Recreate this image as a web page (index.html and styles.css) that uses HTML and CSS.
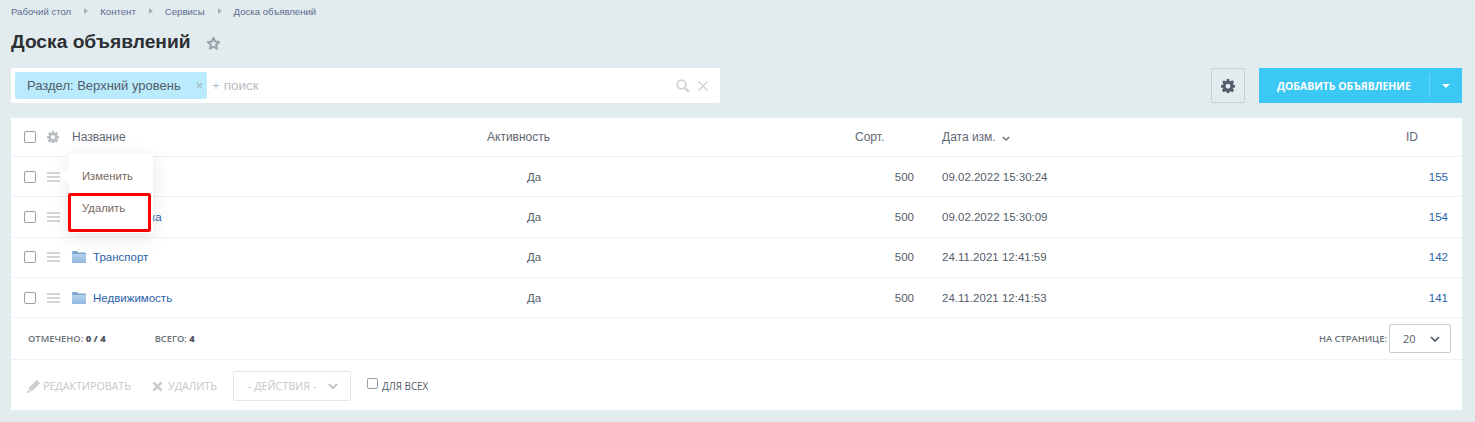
FILE: index.html
```html
<!DOCTYPE html>
<html lang="ru">
<head>
<meta charset="utf-8">
<title>Доска объявлений</title>
<link rel="stylesheet" href="styles.css">
</head>
<body>
<svg class="defs" width="0" height="0" aria-hidden="true">
  <defs>
    <symbol id="gear" viewBox="0 0 16 16">
      <path fill-rule="evenodd" d="M6.600 0h2.800l.4 2.200 1.200.5L12.900 1.400l2 2-1.300 1.900.5 1.200 2.200.4v2.800l-2.200.4-.5 1.200 1.300 1.900-2 2-1.900-1.300-1.200.5-.4 2.200H6.600l-.4-2.200-1.200-.5-1.900 1.300-2-2 1.300-1.900-.5-1.200L0 9.700V6.900l2.200-.4.5-1.200-1.300-1.900 2-2L5 2.700l1.200-.5zM8 5.400a2.800 2.800 0 1 0 0 5.600 2.800 2.800 0 0 0 0-5.600z"/>
    </symbol>
    <linearGradient id="folder-face" x1="0" y1="0" x2="0" y2="1">
      <stop offset="0" stop-color="#b5d3ee"/>
      <stop offset="1" stop-color="#8fb7de"/>
    </linearGradient>
    <symbol id="folder" viewBox="0 0 15 13">
      <path fill="#7ba4cf" d="M0 1.500C0 .7.6 0 1.400 0h3.400c.6 0 1 .3 1.300.8l.4.7h7.100c.8 0 1.400.6 1.400 1.400v8.700c0 .8-.6 1.400-1.400 1.400H1.400C.6 13 0 12.400 0 11.600z"/>
      <path fill="url(#folder-face)" d="M0 4.200c0-.6.5-1 1-1h13c.5 0 1 .4 1 1v7.400c0 .8-.6 1.400-1.400 1.400H1.400C.6 13 0 12.400 0 11.600z"/>
    </symbol>
    <symbol id="chev" viewBox="0 0 10 6">
      <path fill="none" stroke="currentColor" stroke-width="1.700" d="M1 1l4 4 4-4"/>
    </symbol>
  </defs>
</svg>

<nav class="crumbs">
  <a>Рабочий стол</a><i class="crumb-arrow"></i>
  <a>Контент</a><i class="crumb-arrow"></i>
  <a>Сервисы</a><i class="crumb-arrow"></i>
  <a>Доска объявлений</a>
</nav>

<header class="title-row">
  <h1>Доска объявлений</h1>
  <svg class="star" viewBox="0 0 16 16"><path fill="none" stroke="#98a2a9" stroke-width="2.200" stroke-linejoin="round" d="M8 2l1.800 3.900 4.200.5-3.100 2.900.8 4.200L8 11.400l-3.700 2.100.8-4.200L2 6.400l4.200-.5z"/></svg>
</header>

<section class="toolbar">
  <div class="search">
    <span class="tag">Раздел: Верхний уровень<b class="tag-x">×</b></span>
    <span class="placeholder">+ поиск</span>
    <span class="search-icons">
      <svg class="ico-search" viewBox="0 0 14 14"><circle cx="5.500" cy="5.500" r="4.300" fill="none" stroke="#d0d4d8" stroke-width="1.700"/><path d="M8.800 8.800l4.200 4.200" stroke="#d0d4d8" stroke-width="2.200"/></svg>
      <svg class="ico-close" viewBox="0 0 12 12"><path d="M1.500 1.500l9 9M10.500 1.500l-9 9" stroke="#d0d4d8" stroke-width="1.600"/></svg>
    </span>
  </div>
  <button class="gear-btn" type="button"><svg class="gear-big"><use href="#gear"/></svg></button>
  <div class="add-btn">
    <span class="add-label">ДОБАВИТЬ ОБЪЯВЛЕНИЕ</span>
    <span class="add-split"><i class="caret"></i></span>
  </div>
</section>

<main class="panel">
  <div class="row head">
    <div class="c-sel"><span class="cb"></span><svg class="gear-small"><use href="#gear"/></svg></div>
    <div>Название</div>
    <div>Активность</div>
    <div>Сорт.</div>
    <div class="sorted">Дата изм.<svg class="sort-chev"><use href="#chev"/></svg></div>
    <div>ID</div>
  </div>

  <div class="row">
    <div class="c-sel"><span class="cb"></span><span class="burger"></span></div>
    <div class="c-name"></div>
    <div class="c-act">Да</div><div class="c-sort">500</div><div>09.02.2022 15:30:24</div><div class="c-id"><a>155</a></div>
  </div>
  <div class="row">
    <div class="c-sel"><span class="cb"></span><span class="burger"></span></div>
    <div class="c-name"><a class="name-tail">ка</a></div>
    <div class="c-act">Да</div><div class="c-sort">500</div><div>09.02.2022 15:30:09</div><div class="c-id"><a>154</a></div>
  </div>
  <div class="row">
    <div class="c-sel"><span class="cb"></span><span class="burger"></span></div>
    <div class="c-name"><svg class="folder"><use href="#folder"/></svg><a>Транспорт</a></div>
    <div class="c-act">Да</div><div class="c-sort">500</div><div>24.11.2021 12:41:59</div><div class="c-id"><a>142</a></div>
  </div>
  <div class="row">
    <div class="c-sel"><span class="cb"></span><span class="burger"></span></div>
    <div class="c-name"><svg class="folder"><use href="#folder"/></svg><a>Недвижимость</a></div>
    <div class="c-act">Да</div><div class="c-sort">500</div><div>24.11.2021 12:41:53</div><div class="c-id"><a>141</a></div>
  </div>

  <div class="summary">
    <span class="stat">ОТМЕЧЕНО: <b>0 / 4</b></span>
    <span class="stat">ВСЕГО: <b>4</b></span>
    <span class="per-page">НА СТРАНИЦЕ:</span>
    <span class="per-select">20<svg class="per-chev"><use href="#chev"/></svg></span>
  </div>

  <div class="actions">
    <span class="act">
      <svg class="ico-pen" viewBox="0 0 14 14"><path fill="#c9cdd0" d="M10.500 0L14 3.500 5 12.500 1.500 9zM1 10l3 3-4 1z"/></svg>РЕДАКТИРОВАТЬ
    </span>
    <span class="act act-last">
      <svg class="ico-x" viewBox="0 0 12 12"><path d="M1.500 1.500l9 9M10.500 1.500l-9 9" stroke="#c9cdd0" stroke-width="2.800"/></svg>УДАЛИТЬ
    </span>
    <span class="act-select">- ДЕЙСТВИЯ -<svg class="act-chev"><use href="#chev"/></svg></span>
    <span class="for-all"><span class="cb cb-small"></span>ДЛЯ ВСЕХ</span>
  </div>

  <div class="popup">
    <div class="popup-item">Изменить</div>
    <div class="popup-item">Удалить</div>
  </div>
  <div class="highlight"></div>
</main>
</body>
</html>
```
FILE: styles.css
```css
* { box-sizing: border-box; }
html, body { margin: 0; height: 100%; }
body {
  background: #e2ebee;
  font-family: "Liberation Sans", Arial, sans-serif;
  color: #535c69;
  padding: 0 13px 0 11px;
  overflow: hidden;
}
.defs { position: absolute; }

.crumbs {
  display: flex;
  align-items: center;
  height: 22px;
  font-size: 9.600px;
  color: #5c6c8e;
}
.crumb-arrow {
  width: 0;
  height: 0;
  margin: 0 12px 0 13px;
  border-left: 4px solid #a6b0b7;
  border-top: 3px solid transparent;
  border-bottom: 3px solid transparent;
}

.title-row {
  display: flex;
  align-items: center;
  height: 38px;
  padding-top: 1px;
}
h1 {
  margin: 0;
  font-size: 19.200px;
  font-weight: 700;
  color: #2c2f33;
  line-height: 38px;
}
.star { width: 15px; height: 15px; margin: 3px 0 0 16px; }

.toolbar {
  display: flex;
  align-items: center;
  height: 35px;
  margin-top: 8px;
}
.search {
  display: flex;
  align-items: center;
  width: 709px;
  height: 35px;
  padding: 4px;
  background: #fff;
  border-radius: 2px;
}
.tag {
  display: flex;
  align-items: center;
  width: 192px;
  height: 27px;
  padding-left: 12px;
  background: #b9ebfd;
  border-radius: 2px;
  font-size: 13px;
  color: #535c69;
}
.tag-x {
  margin-left: 15px;
  font-size: 13px;
  font-weight: 400;
  color: #a0b2ba;
}
.placeholder {
  margin-left: 5px;
  font-size: 13.500px;
  color: #b9bdc1;
}
.search-icons {
  display: flex;
  align-items: center;
  gap: 7px;
  margin-left: auto;
  padding-right: 7px;
}
.ico-search { width: 14px; height: 14px; }
.ico-close { width: 12px; height: 12px; }

.gear-btn {
  display: flex;
  align-items: center;
  justify-content: center;
  width: 34px;
  height: 35px;
  margin-left: auto;
  padding: 0;
  background: #e4ebee;
  border: 1px solid #c8d0d4;
  border-radius: 2px;
}
.gear-big { width: 14px; height: 14px; fill: #535c69; }

.add-btn {
  display: flex;
  align-items: center;
  width: 203px;
  height: 35px;
  margin-left: 14px;
  background: #3bc8f5;
  color: #fff;
  font-family: "Open Sans", sans-serif;
  font-size: 10.450px;
  font-weight: 700;
}
.add-label { width: 170px; padding-left: 18px; white-space: nowrap; }
.add-split {
  display: flex;
  align-items: center;
  justify-content: center;
  width: 33px;
  height: 23px;
  border-left: 1px solid #6cd6f8;
}
.caret {
  width: 0;
  height: 0;
  border-top: 4px solid #fff;
  border-left: 4px solid transparent;
  border-right: 4px solid transparent;
}

.panel {
  position: relative;
  height: 292px;
  margin-top: 15px;
  background: #fff;
  font-size: 11.500px;
}
.row {
  display: grid;
  grid-template-columns: 61px 415px 368px 87px 464px 56px;
  align-items: center;
  height: 40.300px;
  border-bottom: 1px solid #eef2f4;
}
.row.head {
  height: 39px;
  font-size: 12px;
  color: #5f6873;
}
.c-sel {
  display: flex;
  align-items: center;
  padding-left: 13px;
}
.cb {
  display: block;
  width: 12px;
  height: 12px;
  background: #fff;
  border: 1px solid #9a9fa4;
  border-radius: 2px;
}
.gear-small { width: 12px; height: 12px; margin-left: 11px; fill: #b7bcc0; }
.burger {
  display: block;
  width: 13px;
  height: 10px;
  margin-left: 11px;
  background: linear-gradient(#d3d6d8 0 2px, transparent 2px 4px, #d3d6d8 4px 6px, transparent 6px 8px, #d3d6d8 8px 10px);
}
.c-name { display: flex; align-items: center; }
.folder { width: 14px; height: 12px; margin-right: 7px; }
.name-tail { margin-left: 78px; }
a { color: #2a62a8; text-decoration: none; }
.crumbs a { color: #5c6c8e; }
.c-act { padding-left: 40px; }
.c-sort { padding-right: 28px; text-align: right; }
.c-id { padding-right: 14px; text-align: right; }
.sorted { display: flex; align-items: center; }
.sort-chev { width: 8px; height: 5px; margin: 2px 0 0 6px; color: #70777f; }

.summary {
  display: flex;
  align-items: center;
  height: 42px;
  padding: 0 11px 0 17px;
  border-bottom: 1px solid #eef2f4;
  font-family: "Open Sans", sans-serif;
  font-size: 9.350px;
  font-weight: 600;
  color: #6b7178;
}
.stat { margin-right: 49px; }
.stat b { color: #50565d; }
.per-page { margin-left: auto; margin-right: 2px; }
.per-select {
  display: flex;
  align-items: center;
  justify-content: space-between;
  width: 62px;
  height: 29px;
  padding: 0 10px 0 13px;
  border: 1px solid #c6cdd3;
  border-radius: 2px;
  font-size: 11px;
  font-weight: 400;
  color: #535c69;
}
.per-chev { width: 10px; height: 6px; color: #535c69; }

.actions {
  display: flex;
  align-items: center;
  height: 50px;
  padding: 2px 0 0 16px;
  font-family: "Open Sans", sans-serif;
  font-size: 10.700px;
  color: #c4c8cb;
}
.act { display: flex; align-items: center; margin-right: 21px; }
.act-last { margin-right: 16px; }
.ico-pen { width: 13px; height: 13px; margin-right: 3px; }
.ico-x { width: 11px; height: 11px; margin-right: 5px; }
.act-select {
  display: flex;
  align-items: center;
  justify-content: space-between;
  width: 118px;
  height: 30px;
  margin-right: 16px;
  padding: 0 12px 0 14px;
  border: 1px solid #e3e7ea;
  border-radius: 2px;
}
.act-chev { width: 10px; height: 6px; color: #b4b9bd; }
.for-all {
  display: flex;
  align-items: center;
  font-size: 9.900px;
  color: #535c69;
}
.cb-small { width: 11px; height: 11px; margin: -5px 4px 0 0; }

.popup {
  position: absolute;
  left: 58px;
  top: 36px;
  width: 84px;
  height: 79px;
  padding-top: 13px;
  background: #fff;
  box-shadow: 0 4px 16px rgba(80, 95, 110, .16);
  font-size: 11.300px;
  color: #7a6a62;
}
.popup::before {
  content: "";
  position: absolute;
  left: -6px;
  top: 15px;
  width: 12px;
  height: 12px;
  background: #fff;
  transform: rotate(45deg);
}
.popup-item { position: relative; height: 32px; line-height: 18px; padding-left: 13px; }
.highlight {
  position: absolute;
  left: 57px;
  top: 75px;
  width: 83px;
  height: 39px;
  border: 3px solid #ff0000;
  border-radius: 2px;
}
```
